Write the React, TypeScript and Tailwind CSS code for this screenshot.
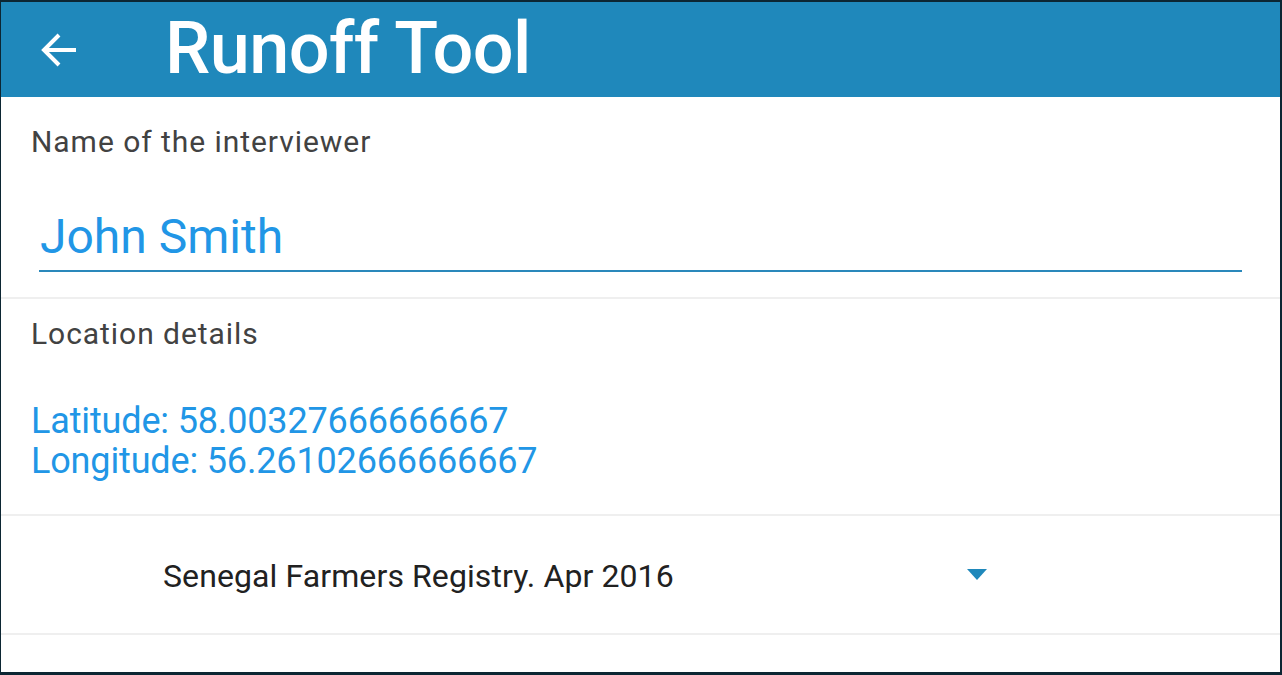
export default function App() {
  return (
    <div className="w-[1282px] h-[675px] bg-[#0c2633] pt-[2px] pl-[1px] pr-[2px] pb-[3px] overflow-hidden" style={{ fontFamily: 'Roboto, "Noto Sans", sans-serif' }}>
      <div className="h-full bg-white flex flex-col">
        {/* App bar */}
        <div className="h-[95px] bg-[#1f88bb] flex items-center shrink-0">
          <div className="w-[164px] pl-[39px] flex items-center">
            <svg width="36" height="36" viewBox="0 0 36 36" fill="none" stroke="white" strokeWidth="4" strokeLinecap="butt">
              <path d="M4 18h32" />
              <path d="M19 3L4 18l15 15" />
            </svg>
          </div>
          <h1 className="text-[72px] leading-none font-medium text-white tracking-[-0.6px] pb-[2px]">Runoff Tool</h1>
        </div>

        {/* Interviewer */}
        <div className="h-[202px] border-b-2 border-[#efefef] shrink-0 pt-[25px]">
          <div className="pl-[30px] text-[30px] leading-[40px] tracking-[0.95px] text-[#424242]">Name of the interviewer</div>
          <div className="ml-[38px] mr-[38px] mt-[43px] border-b-2 border-[#2a88bb] pb-[1px]">
            <div className="pl-[1px] text-[48px] leading-[64px] text-[#2196e6]">John Smith</div>
          </div>
        </div>

        {/* Location */}
        <div className="h-[217px] border-b-2 border-[#efefef] shrink-0 pt-[15px]">
          <div className="pl-[30px] text-[30px] leading-[40px] tracking-[0.95px] text-[#424242]">Location details</div>
          <div className="pl-[30px] mt-[47px] text-[36px] leading-[40px] tracking-[-0.15px] text-[#2196e6]">
            <div>Latitude: 58.00327666666667</div>
            <div>Longitude: 56.26102666666667</div>
          </div>
        </div>

        {/* Dataset select */}
        <div className="h-[119px] border-b-2 border-[#efefef] shrink-0 flex items-center">
          <div className="pl-[162px] w-[966px] pt-[3px] text-[32px] tracking-[0.1px] text-[#212121]">Senegal Farmers Registry. Apr 2016</div>
          <svg width="20" height="11" viewBox="0 0 20 11">
            <path d="M0 0h20L10 11z" fill="#1f88bb" />
          </svg>
        </div>
      </div>
    </div>
  );
}
